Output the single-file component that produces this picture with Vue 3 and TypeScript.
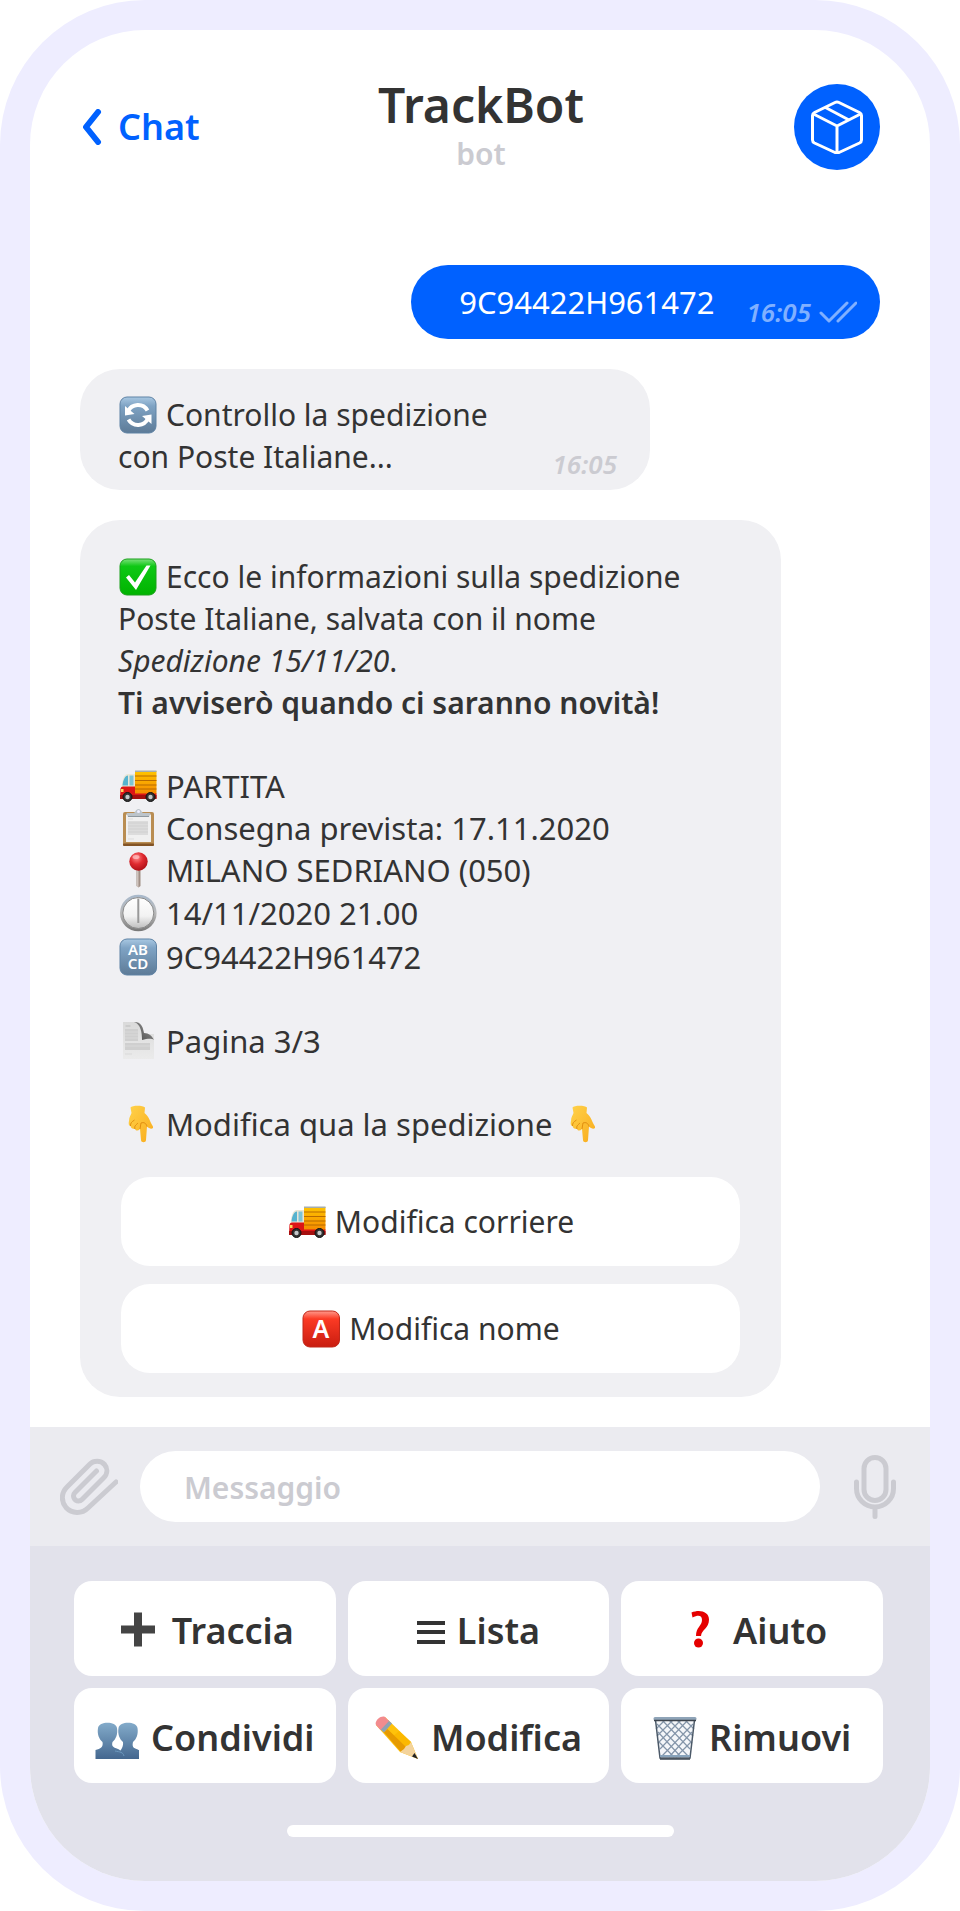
<script setup lang="ts">
interface Line {
  icon?: string
  text: string
  tail?: string
  tone?: 'italic' | 'bold'
}

interface Key {
  icon: string
  label: string
}

const intro: Line[] = [
  { icon: 'check', text: 'Ecco le informazioni sulla spedizione' },
  { text: 'Poste Italiane, salvata con il nome' },
  { text: 'Spedizione 15/11/20', tail: '.', tone: 'italic' },
  { text: 'Ti avviserò quando ci saranno novità!', tone: 'bold' },
]

const details: Line[] = [
  { icon: 'truck', text: 'PARTITA' },
  { icon: 'clipboard', text: 'Consegna prevista: 17.11.2020' },
  { icon: 'pin', text: 'MILANO SEDRIANO (050)' },
]

const keys: Key[] = [
  { icon: 'plus', label: 'Traccia' },
  { icon: 'list', label: 'Lista' },
  { icon: 'question', label: 'Aiuto' },
  { icon: 'people', label: 'Condividi' },
  { icon: 'pencil', label: 'Modifica' },
  { icon: 'basket', label: 'Rimuovi' },
]
</script>

<template>
  <div class="phone">
    <svg class="sprite" aria-hidden="true">
      <defs>
        <linearGradient id="g-blue" x1="0" y1="0" x2="0" y2="1">
          <stop offset="0" stop-color="#a9c8e2" />
          <stop offset="0.25" stop-color="#7fa3c4" />
          <stop offset="1" stop-color="#5d7b97" />
        </linearGradient>
        <linearGradient id="g-green" x1="0" y1="0" x2="0" y2="1">
          <stop offset="0" stop-color="#7be07b" />
          <stop offset="0.2" stop-color="#0fc815" />
          <stop offset="1" stop-color="#00b300" />
        </linearGradient>
        <linearGradient id="g-red" x1="0" y1="0" x2="0" y2="1">
          <stop offset="0" stop-color="#ff9a8c" />
          <stop offset="0.22" stop-color="#fb3a24" />
          <stop offset="1" stop-color="#c91d10" />
        </linearGradient>
        <linearGradient id="g-cargo" x1="0" y1="0" x2="0" y2="1">
          <stop offset="0" stop-color="#ffc400" />
          <stop offset="1" stop-color="#f58a00" />
        </linearGradient>
        <linearGradient id="g-people" x1="0" y1="0" x2="0" y2="1">
          <stop offset="0" stop-color="#83abca" />
          <stop offset="1" stop-color="#44678f" />
        </linearGradient>
        <linearGradient id="g-hand" x1="0" y1="0" x2="1" y2="1">
          <stop offset="0" stop-color="#ffd24a" />
          <stop offset="1" stop-color="#f9ab1c" />
        </linearGradient>
        <linearGradient id="g-rim" x1="0" y1="0" x2="0" y2="1">
          <stop offset="0" stop-color="#a8b9cc" />
          <stop offset="0.5" stop-color="#b9b9b9" />
          <stop offset="1" stop-color="#777" />
        </linearGradient>
        <linearGradient id="g-face" x1="0" y1="0" x2="0" y2="1">
          <stop offset="0" stop-color="#fff" />
          <stop offset="0.6" stop-color="#f2f2f2" />
          <stop offset="1" stop-color="#bdbdbd" />
        </linearGradient>
        <linearGradient id="g-page" x1="0" y1="0" x2="0" y2="1">
          <stop offset="0" stop-color="#dadada" />
          <stop offset="1" stop-color="#ebebeb" />
        </linearGradient>
        <linearGradient id="g-curl" x1="0" y1="1" x2="1" y2="0">
          <stop offset="0" stop-color="#4a4a4a" />
          <stop offset="1" stop-color="#9a9a9a" />
        </linearGradient>
        <radialGradient id="g-ball" cx="0.4" cy="0.3" r="0.7">
          <stop offset="0" stop-color="#ff8a8a" />
          <stop offset="0.5" stop-color="#e02a30" />
          <stop offset="1" stop-color="#b01018" />
        </radialGradient>
      </defs>

      <symbol id="i-refresh" viewBox="0 0 40 40">
        <rect x="2" y="2" width="36" height="36" rx="7" fill="url(#g-blue)" stroke="#5f83a5" />
        <g fill="none" stroke="#fff" stroke-width="4">
          <path d="M10 16.500a11 11 0 0 1 19.500-1" />
          <path d="M30 23.500a11 11 0 0 1-19.500 1" />
        </g>
        <path d="M7 11v9.500l9.500-1.500zM33.500 29v-9.500l-9.500 1.500z" fill="#fff" />
      </symbol>
      <symbol id="i-check" viewBox="0 0 40 40">
        <rect x="2" y="2" width="36" height="36" rx="7" fill="url(#g-green)" stroke="#1aa01a" />
        <path d="M8 20.500l3-2.500 6 7.500L28.500 8.500h4L18 33z" fill="#fff" />
      </symbol>
      <symbol id="i-truck" viewBox="0 0 40 40">
        <rect x="17" y="5" width="21.500" height="23" fill="url(#g-cargo)" />
        <rect x="17" y="4.500" width="21.500" height="1.500" fill="#a5adad" />
        <path d="M17 10h21.500M17 14.500h21.500M17 19h21.500M17 23h21.500" stroke="#b86a00" />
        <path d="M3.500 22C4 14 6 8 10 8h7v15z" fill="#e9e6d6" />
        <path d="M4.500 19.500C5 14 7 9.500 10 9.500v10z" fill="#56b3cf" />
        <path d="M11.500 9.500h4v10h-4z" fill="#7cc4d6" />
        <path d="M2.500 22.500Q3 20.500 5 20.500h12v7h21.500v5H2z" fill="#dd1515" />
        <path d="M2 29h36.500v4H2z" fill="#a60f0f" />
        <rect x="3" y="23" width="2.500" height="3" fill="#ffd75a" />
        <g fill="#333" stroke="#111">
          <circle cx="9.500" cy="31" r="4.500" />
          <circle cx="32.500" cy="31" r="4.500" />
        </g>
        <circle cx="9.500" cy="31" r="2.200" fill="#c4c8ca" />
        <circle cx="32.500" cy="31" r="2.200" fill="#c4c8ca" />
      </symbol>
      <symbol id="i-clipboard" viewBox="0 0 40 40">
        <rect x="5" y="4" width="31" height="34" rx="2" fill="#b98d52" />
        <rect x="5" y="35.500" width="31" height="2.500" rx="1" fill="#835425" />
        <path d="M8 6.500h25V34H8z" fill="#f0f0f0" />
        <path d="M10 13h20v14H10z" fill="#dcdcdc" />
        <path d="M10 15h20M10 18h20M10 21h20M10 24h20" stroke="#d0d0d0" />
        <path d="M10 11h5M10 31h6" stroke="#ddd" />
        <path d="M8.500 5h7c2 0 2-4 5-4s3 4 5 4h7l-1.500 4h-21z" fill="#bcc4ca" />
        <path d="M10 8.500h21" stroke="#8f989f" />
        <circle cx="20.500" cy="3.500" r="1.500" fill="#eef" />
      </symbol>
      <symbol id="i-pin" viewBox="0 0 40 40">
        <path d="M18.500 18h4v18l-2 1.500-2-1.500z" fill="#a08f86" />
        <path d="M19 18h1.500v19H19z" fill="#cfc4be" />
        <circle cx="20.500" cy="11.500" r="9.200" fill="url(#g-ball)" />
        <ellipse cx="18" cy="7" rx="3.500" ry="2" fill="#ffc4c4" opacity="0.700" />
      </symbol>
      <symbol id="i-clock" viewBox="0 0 40 40">
        <circle cx="20.300" cy="20" r="18.300" fill="url(#g-rim)" />
        <circle cx="20.300" cy="20" r="15.500" fill="url(#g-face)" stroke="#8a8a8a" />
        <path d="M20.300 5.500V30" stroke="#999" stroke-width="2" />
      </symbol>
      <symbol id="i-blue" viewBox="0 0 40 40">
        <rect x="2" y="2" width="36.500" height="36" rx="7" fill="url(#g-blue)" stroke="#5f83a5" />
      </symbol>
      <symbol id="i-red" viewBox="0 0 40 40">
        <rect x="2" y="2" width="36.500" height="36" rx="7" fill="url(#g-red)" stroke="#c2281a" />
      </symbol>
      <symbol id="i-page" viewBox="0 0 40 40">
        <path d="M5 1h15q5 2 5 12h11v25H5z" fill="url(#g-page)" />
        <path d="M7.500 5h5" stroke="#ccc" stroke-width="2" />
        <path d="M7 8h13v12H7zM7 22h25v7H7z" fill="#cfcfcf" />
        <path d="M7 11h13M7 14h13M7 17h13M7 25h25M7 33h7" stroke="#d9d9d9" />
        <path d="M16 1c8 0 9 6 10 11 5 0 8 3 10 7-3-2-7-1-12 0 0-7-1-16-8-18z" fill="url(#g-curl)" />
      </symbol>
      <symbol id="i-hand" viewBox="0 0 40 40">
        <path d="M12.500 3.500C14 1 25 1 27 3.500L26.500 9c4 3 5 7 6.500 10 1 2 2.500 3.500 2 5-1.500 1.500-4 .5-6-1.500L28 36c0 3-5 3-5 0l-1-11c-2 2-4 2-5 0-3 0-4-1-4.500-3-2 0-2-3-1.500-5 0-4 2-6 2.500-8z" fill="url(#g-hand)" />
        <path d="M17 25c-1-3 1-4 3-6M12.500 22c0-3 1-4 4-6M22 25l1-6c3-1 5 0 6 3.500" fill="none" stroke="#e08e10" />
      </symbol>
      <symbol id="i-plus" viewBox="0 0 44 44">
        <path d="M18 3.500h8v13h13v8H26v13h-8v-13H5v-8h13z" fill="#444" />
      </symbol>
      <symbol id="i-list" viewBox="0 0 28 44">
        <path d="M0 14h28M0 23h28M0 33h28" stroke="#333" stroke-width="4" />
      </symbol>
      <symbol id="i-question" viewBox="0 0 44 44">
        <path d="M14.500 3.500c8-3.500 17.500-1 17.500 7 0 9-7.500 10-8 16.500h-5c0-9 6-10 6-16 0-5-4-5-9.500-2.500z" fill="#e50000" />
        <circle cx="21.500" cy="34" r="4.500" fill="#e50000" />
      </symbol>
      <symbol id="i-people" viewBox="0 0 44 44">
        <g fill="url(#g-people)">
          <path d="M3 12c1-7 18-7 19 0 1 6-1 11-4.500 14-1 4 0 5 5.500 7 3 1 4.500 5 4.500 10H.5v-9c5-1 8-3 7-8C4 23 2 18 3 12z" />
          <path d="M23.500 12c1-7 18-7 19 0 1 6-1 11-4.500 14-1 4 0 6 3.500 7 2 1 2.500 1 2.500 1v9H19c0-6 10-7 9-17-3.500-3-5.500-8-4.500-14z" />
        </g>
        <path d="M20 35c5 1 8 1 9 5" fill="none" stroke="#6c98bd" />
      </symbol>
      <symbol id="i-pencil" viewBox="0 0 44 44">
        <path d="M1 9L10 1 36 26l7 17-18-7z" fill="#ffc20a" />
        <path d="M4 12L13 4l4 3.500L9 16.500z" fill="#8fa1b2" />
        <path d="M1 9C-1 5 6-1 10 1l4 4-8.500 9z" fill="#f28b8e" />
        <path d="M15 23l9-8 12 11-10 10z" fill="#fbb800" />
        <path d="M9 16.500l3.500-3.500L32 32l-6 4z" fill="#e69a00" />
        <path d="M36 26l7 17-18-7 4-3 2-3 3-1z" fill="#f3d39c" />
        <path d="M39.500 37l3.500 6-6-2.500z" fill="#222" />
      </symbol>
      <symbol id="i-basket" viewBox="0 0 44 44">
        <path d="M2.500 4h39L37 41.500H7z" fill="#f4f6f9" />
        <path d="M4 8l31 32M9 4l28 29M16 4l23 23M24 4l16 16M32 4l9 9M5 16l23 25M6 26l15 15M40 8L9 40M35 4L7 33M28 4L5 27M20 4L4 20M12 4l-9 9M39 16L16 41M38 26L23 41" fill="none" stroke="#8495a9" stroke-width="1.200" />
        <path d="M2.500 4L7 42h30l4.500-38" fill="none" stroke="#4b5968" stroke-width="1.500" />
        <rect x="0.500" y="1" width="43" height="3.500" rx="1.500" fill="#8fa4b8" />
        <path d="M1 4.500h42" stroke="#3d444d" stroke-width="1.500" />
        <path d="M7 40h30" stroke="#88a3bb" stroke-width="2" />
        <path d="M7 43h30" stroke="#3d4650" stroke-width="1.500" />
      </symbol>
    </svg>

    <main class="screen">
      <header class="top">
        <a class="back" href="#">
          <svg width="20" height="36" viewBox="0 0 20 36" aria-hidden="true">
            <path d="M16 3L4 18l12 15" />
          </svg>
          Chat
        </a>
        <div class="title">
          <h1>TrackBot</h1>
          <p>bot</p>
        </div>
        <div class="avatar">
          <svg width="52" height="54" viewBox="0 0 52 54" aria-hidden="true">
            <path d="M3.500 12.500L24 2.500q2-1 4 0l20.500 10q2 1 2 3V40q0 2-2 3L28 52.500q-2 1-4 0L3.500 43q-2-1-2-3V15.500q0-2 2-3zM2.500 14L26 26l23.500-12M26 26v27M14.500 7.500L38 20" />
          </svg>
        </div>
      </header>

      <section class="chat">
        <article class="bubble sent">
          <span>9C94422H961472</span>
          <time>16:05</time>
          <svg class="ticks" width="38" height="22" viewBox="0 0 38 22" aria-hidden="true">
            <path d="M2 12l8 8L28 2M19 20L37 2" />
          </svg>
        </article>

        <article class="bubble short">
          <div>
            <p class="line"><svg class="emoji"><use href="#i-refresh" /></svg>Controllo la spedizione</p>
            <p class="line">con Poste Italiane...</p>
          </div>
          <time>16:05</time>
        </article>

        <article class="bubble full">
          <div>
            <p v-for="l in intro" :key="l.text" class="line">
              <svg v-if="l.icon" class="emoji"><use :href="`#i-${l.icon}`" /></svg>
              <span :class="l.tone">{{ l.text }}</span>{{ l.tail }}
            </p>
          </div>
          <div class="data">
            <p v-for="l in details" :key="l.text" class="line">
              <svg class="emoji"><use :href="`#i-${l.icon}`" /></svg>{{ l.text }}
            </p>
            <p class="line tall">
              <svg class="emoji"><use href="#i-clock" /></svg>14/11/2020 21.00
            </p>
            <p class="line tall">
              <svg class="emoji" viewBox="0 0 40 40">
                <use href="#i-blue" />
                <text class="glyph small" x="20" y="18">AB</text>
                <text class="glyph small" x="20" y="32">CD</text>
              </svg>9C94422H961472
            </p>
          </div>
          <p class="line data"><svg class="emoji"><use href="#i-page" /></svg>Pagina 3/3</p>
          <p class="line data">
            <svg class="emoji"><use href="#i-hand" /></svg>Modifica qua la spedizione
            <svg class="emoji after"><use href="#i-hand" /></svg>
          </p>
          <div class="actions">
            <button type="button">
              <svg class="emoji"><use href="#i-truck" /></svg>Modifica corriere
            </button>
            <button type="button">
              <svg class="emoji" viewBox="0 0 40 40">
                <use href="#i-red" />
                <text class="glyph large" x="20" y="29">A</text>
              </svg>Modifica nome
            </button>
          </div>
        </article>
      </section>

      <form class="composer" @submit.prevent>
        <button type="button" aria-label="Allega">
          <svg width="58" height="58" viewBox="0 0 58 58" aria-hidden="true">
            <path d="M36.500 13L15 34.500c-3 3-1 8.500 3.500 8.500 1.500 0 2.500-.5 3.500-1.500L43.500 20c4.500-4.500 4-10 1-13.500-4-4.500-11-4-14.500-.5L7 29c-6 6-6 14.500-1 20.500 6 6.500 16 6.500 22 .5L56 24" />
          </svg>
        </button>
        <input type="text" placeholder="Messaggio" aria-label="Messaggio" />
        <button type="button" aria-label="Messaggio vocale">
          <svg width="42" height="64" viewBox="0 0 42 64" aria-hidden="true">
            <path d="M21 2.500a11 11 0 0 1 11 11v21a11 11 0 0 1-22 0v-21a11 11 0 0 1 11-11zM2.500 27v6.500a18.500 18.500 0 0 0 37 0V27M21 53v8.500" />
          </svg>
        </button>
      </form>

      <nav class="keyboard">
        <div class="keys">
          <button v-for="k in keys" :key="k.label" type="button">
            <svg :class="['key-icon', { narrow: k.icon === 'list' }]"><use :href="`#i-${k.icon}`" /></svg>
            {{ k.label }}
          </button>
        </div>
        <div class="home"></div>
      </nav>
    </main>
  </div>
</template>

<style>
body {
  margin: 0;
  background: #fff;
}
</style>

<style scoped>
.phone {
  padding: 30px;
  border-radius: 145px;
  background: #eeedff;
  color: #333;
  font: 400 30px/42px "Noto Sans", "Open Sans", sans-serif;
}
.sprite {
  position: absolute;
  width: 0;
  height: 0;
}
.glyph {
  fill: #fff;
  font-weight: 600;
  text-anchor: middle;
}
.small {
  font-size: 15px;
}
.large {
  font-size: 25px;
}
.screen {
  overflow: hidden;
  border-radius: 115px;
  background: #fff;
}
h1,
p {
  margin: 0;
}
button {
  display: flex;
  align-items: center;
  justify-content: center;
  padding: 0;
  border: 0;
  background: #fff;
  color: inherit;
  font: inherit;
  white-space: nowrap;
}
.top {
  display: grid;
  grid-template-columns: 1fr auto 1fr;
  align-items: center;
  padding: 49px 50px 0 52px;
}
.back {
  display: flex;
  align-items: center;
  gap: 16px;
  color: #0061ff;
  font-size: 36px;
  font-weight: 600;
  text-decoration: none;
}
.back path {
  fill: none;
  stroke: #0061ff;
  stroke-width: 6;
  stroke-linecap: round;
  stroke-linejoin: round;
}
.title {
  padding-top: 4px;
  text-align: center;
}
.title h1 {
  font-size: 48px;
  font-weight: 600;
  line-height: 44px;
}
.title p {
  margin-top: 6px;
  color: #cbcbd1;
  font-weight: 600;
}
.avatar {
  display: flex;
  align-items: center;
  justify-content: center;
  justify-self: end;
  width: 86px;
  height: 86px;
  border-radius: 50%;
  background: #0061ff;
}
.avatar path {
  fill: none;
  stroke: #fff;
  stroke-width: 3;
  stroke-linejoin: round;
}
.chat {
  display: flex;
  flex-direction: column;
  align-items: flex-start;
  gap: 30px;
  padding: 90px 50px 30px;
}
.bubble {
  box-sizing: border-box;
  border-radius: 40px;
  background: #f0f0f3;
}
time {
  color: #cbcbd1;
  font-size: 26px;
  font-style: italic;
  font-weight: 600;
  line-height: 28px;
}
.sent {
  display: flex;
  align-items: center;
  align-self: flex-end;
  height: 74px;
  padding: 0 23px 0 48px;
  background: #0061ff;
  color: #fff;
  font-size: 31px;
}
.sent time {
  margin: 20px 8px 0 32px;
  color: #80b0ff;
}
.ticks {
  margin-top: 20px;
}
.ticks path {
  fill: none;
  stroke: #80b0ff;
  stroke-width: 3;
  stroke-linecap: round;
  stroke-linejoin: round;
}
.short {
  display: flex;
  align-items: flex-end;
  justify-content: space-between;
  width: 100%;
  max-width: 570px;
  padding: 25px 33px 12px 38px;
}
.line {
  display: flex;
  align-items: center;
}
.data {
  font-size: 31px;
}
.tall {
  line-height: 44px;
}
.emoji {
  flex: none;
  width: 40px;
  height: 40px;
  margin-right: 8px;
}
.after {
  margin: 0 0 0 8px;
}
.italic {
  font-style: italic;
}
.bold {
  font-weight: 600;
}
.full {
  display: flex;
  flex-direction: column;
  gap: 41px;
  width: 100%;
  max-width: 701px;
  padding: 36px 38px 24px;
}
.actions {
  display: flex;
  flex-direction: column;
  gap: 18px;
  margin: -9px 3px 0;
}
.actions button {
  height: 89px;
  border-radius: 29px;
}
.composer {
  display: flex;
  align-items: center;
  padding: 24px 34px 24px 30px;
  background: #ebebf0;
}
.composer button {
  background: none;
}
.composer path {
  fill: none;
  stroke: #cbcbd1;
  stroke-width: 5;
  stroke-linecap: round;
}
.composer input {
  box-sizing: border-box;
  flex: 1;
  min-width: 0;
  height: 71px;
  margin: 0 34px 0 22px;
  padding: 2px 44px 0;
  border: 0;
  border-radius: 36px;
  background: #fff;
  color: #333;
  font: inherit;
  font-weight: 600;
}
.composer input::placeholder {
  color: #cbcbd1;
  opacity: 1;
}
.keyboard {
  padding: 35px 0 44px;
  background: #e2e2eb;
}
.keys {
  display: grid;
  grid-template-columns: repeat(3, minmax(0, 1fr));
  gap: 12px;
  padding: 0 47px 0 44px;
}
.keys button {
  gap: 12px;
  height: 95px;
  padding-top: 4px;
  border-radius: 18px;
  font-size: 36px;
  font-weight: 600;
}
.key-icon {
  flex: none;
  width: 44px;
  height: 44px;
}
.narrow {
  width: 28px;
}
.home {
  width: 43%;
  height: 12px;
  margin: 42px auto 0;
  border-radius: 6px;
  background: #fff;
}
</style>
